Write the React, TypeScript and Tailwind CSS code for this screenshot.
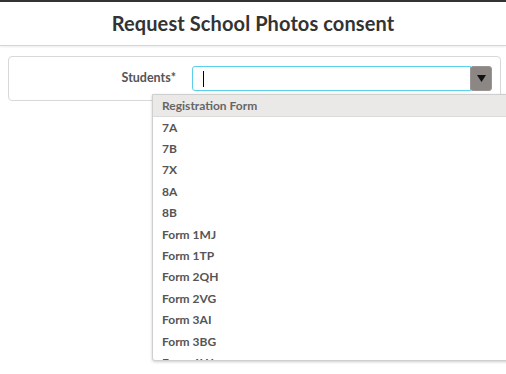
import React from "react";

const forms = [
  "7A",
  "7B",
  "7X",
  "8A",
  "8B",
  "Form 1MJ",
  "Form 1TP",
  "Form 2QH",
  "Form 2VG",
  "Form 3AI",
  "Form 3BG",
  "Form 4HJ",
];

export default function App() {
  return (
    <div
      className="relative h-[374px] w-[506px] overflow-hidden bg-white text-[#555]"
      style={{ fontFamily: "Lato, 'Open Sans', sans-serif" }}
    >
      {/* header */}
      <div className="h-[46px] border-t-2 border-[#333] border-b border-b-[#d6d6d6] shadow-[0_1px_2px_rgba(0,0,0,0.08)] flex items-center justify-center">
        <h1 className="text-[20px] font-bold text-[#333] tracking-[0.1px] pb-[1px]">
          Request School Photos consent
        </h1>
      </div>

      {/* form card */}
      <div className="ml-[8px] mt-[10px] mr-[5px] h-[45px] rounded-[4px] border border-[#d8d8d8] flex items-center">
        <label className="w-[183px] text-right text-[12.5px] font-bold text-[#555] pr-[16px]">
          Students*
        </label>
        <div className="flex h-[25px] w-[300px]">
          <div className="flex-1 rounded-l-[3px] border border-[#5bd0ea] flex items-center pl-[10px]">
            <span className="block h-[16px] w-[1px] bg-black" />
          </div>
          <div className="w-[22px] rounded-[3px] bg-[#8c8684] border border-[#9a9492] flex items-center justify-center -ml-[1px]">
            <svg width="9" height="7" viewBox="0 0 9 7">
              <path d="M0 0h9L4.5 7z" fill="#111" />
            </svg>
          </div>
        </div>
      </div>

      {/* dropdown */}
      <div className="absolute left-[152px] top-[94px] w-[360px] h-[267px] overflow-hidden rounded-bl-[3px] border border-[#cfcfcf] bg-white shadow-[0_1px_3px_rgba(0,0,0,0.2)]">
        <div className="h-[22px] bg-[#ebe9e7] border-b border-[#dcdad8] flex items-center pl-[9px] text-[12px] font-bold text-[#666]">
          Registration Form
        </div>
        <ul>
          {forms.map((f) => (
            <li
              key={f}
              className="h-[21.4px] flex items-center pl-[9px] text-[12px] font-bold text-[#555]"
            >
              {f}
            </li>
          ))}
        </ul>
      </div>
    </div>
  );
}
